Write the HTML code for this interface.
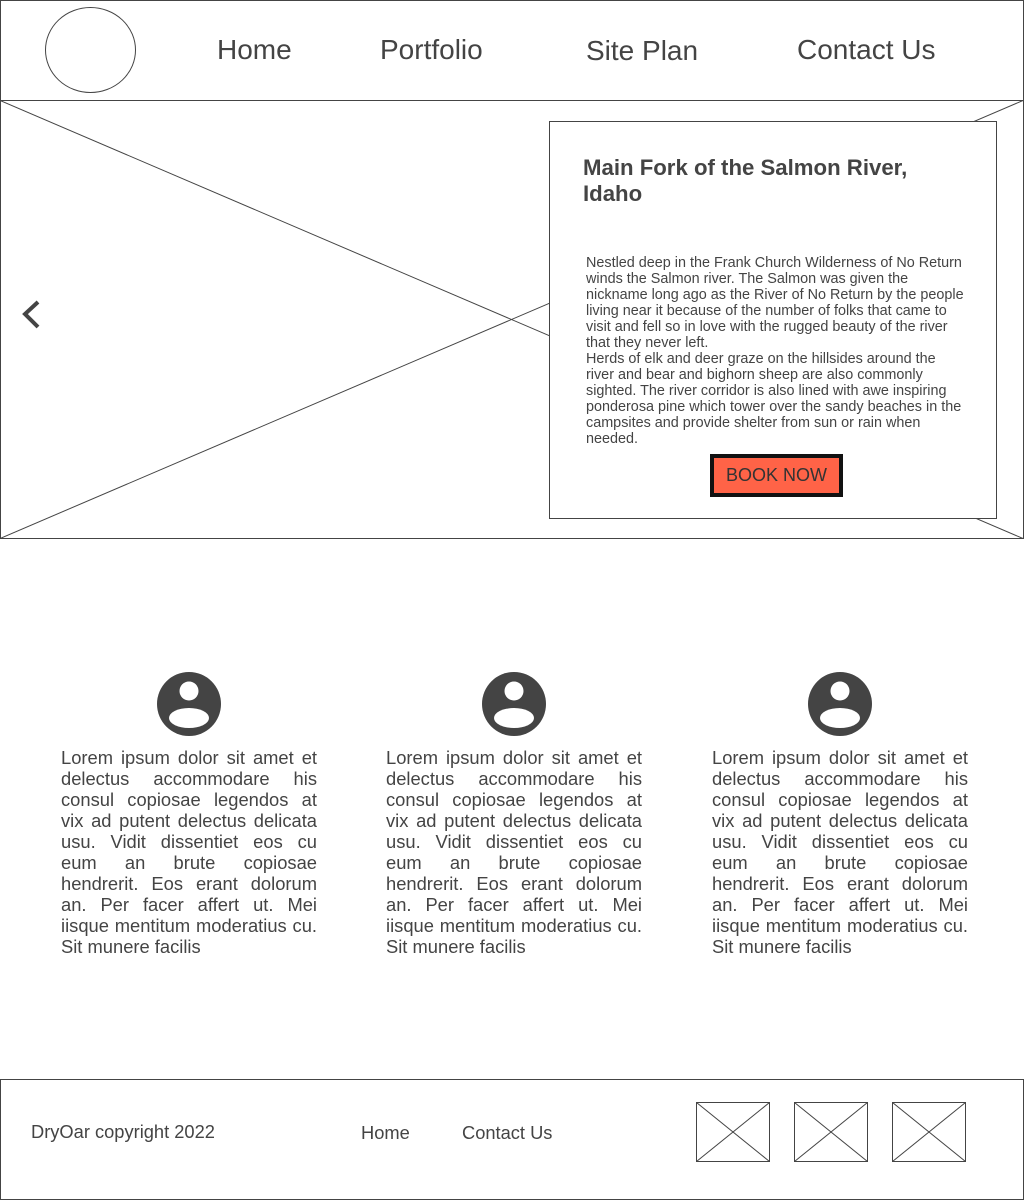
<!DOCTYPE html>
<html><head><meta charset="utf-8"><style>
*{margin:0;padding:0;box-sizing:border-box}
body{width:1024px;height:1200px;position:relative;background:#fff;font-family:"Liberation Sans",Arial,sans-serif;color:#444;overflow:hidden}
.a{position:absolute}
.nav{font-size:28px;top:34px;color:#444}
.card{left:549px;top:121px;width:448px;height:398px;border:1px solid #444;background:#fff}
.lorem{width:256px;font-size:18.35px;line-height:21px;text-align:justify;top:747px}
.fl{font-size:18.3px;color:#444}
</style></head><body>
<svg class="a" style="left:0;top:0" width="1024" height="1200">
<rect x="0.5" y="0.5" width="1023" height="100" fill="none" stroke="#444"/>
<ellipse cx="90.5" cy="50" rx="45" ry="42.5" fill="none" stroke="#444"/>
<rect x="0.5" y="100.5" width="1023" height="438" fill="none" stroke="#444"/>
<line x1="0" y1="100.5" x2="1023" y2="538.5" stroke="#444"/>
<line x1="0" y1="538.5" x2="1023" y2="100.5" stroke="#444"/>
<polyline points="38,302 25,314 38,327" fill="none" stroke="#444" stroke-width="4"/>
<rect x="0.5" y="1079.5" width="1023" height="120" fill="none" stroke="#444"/>
<g fill="none" stroke="#444" stroke-width="1">
<rect x="696.5" y="1102.5" width="73" height="59"/><line x1="696.5" y1="1102.5" x2="769.5" y2="1161.5"/><line x1="696.5" y1="1161.5" x2="769.5" y2="1102.5"/>
<rect x="794.5" y="1102.5" width="73" height="59"/><line x1="794.5" y1="1102.5" x2="867.5" y2="1161.5"/><line x1="794.5" y1="1161.5" x2="867.5" y2="1102.5"/>
<rect x="892.5" y="1102.5" width="73" height="59"/><line x1="892.5" y1="1102.5" x2="965.5" y2="1161.5"/><line x1="892.5" y1="1161.5" x2="965.5" y2="1102.5"/>
</g>
<defs>
<g id="u"><circle r="32" fill="#444"/><circle cx="0" cy="-13" r="9.5" fill="#fff"/><ellipse cx="0" cy="14" rx="20" ry="10" fill="#fff"/></g></defs>
<use href="#u" x="189" y="704"/><use href="#u" x="514" y="704"/><use href="#u" x="840" y="704"/>
</svg>
<div class="a nav" style="left:217px">Home</div>
<div class="a nav" style="left:380px">Portfolio</div>
<div class="a nav" style="left:586px;top:35px">Site Plan</div>
<div class="a nav" style="left:797px">Contact Us</div>
<div class="a card">
<div class="a" style="left:33px;top:33px;font-size:22.2px;font-weight:bold;line-height:26px;width:380px;color:#444">Main Fork of the Salmon River, Idaho</div>
<div class="a" style="left:36px;top:133px;width:380px;font-size:14.4px;line-height:16px;color:#444">Nestled deep in the Frank Church Wilderness of No Return winds the Salmon river. The Salmon was given the nickname long ago as the River of No Return by the people living near it because of the number of folks that came to visit and fell so in love with the rugged beauty of the river that they never left.<br>Herds of elk and deer graze on the hillsides around the river and bear and bighorn sheep are also commonly sighted. The river corridor is also lined with awe inspiring ponderosa pine which tower over the sandy beaches in the campsites and provide shelter from sun or rain when needed.</div>
<div class="a" style="left:160px;top:332px;width:133px;height:43px;border:4px solid #111;background:#ff6347;font-size:18px;text-align:center;line-height:35px;color:#333">BOOK NOW</div>
</div>
<div class="a lorem" style="left:61px">Lorem ipsum dolor sit amet et delectus accommodare his consul copiosae legendos at vix ad putent delectus delicata usu. Vidit dissentiet eos cu eum an brute copiosae hendrerit. Eos erant dolorum an. Per facer affert ut. Mei iisque mentitum moderatius cu. Sit munere facilis</div>
<div class="a lorem" style="left:386px">Lorem ipsum dolor sit amet et delectus accommodare his consul copiosae legendos at vix ad putent delectus delicata usu. Vidit dissentiet eos cu eum an brute copiosae hendrerit. Eos erant dolorum an. Per facer affert ut. Mei iisque mentitum moderatius cu. Sit munere facilis</div>
<div class="a lorem" style="left:712px">Lorem ipsum dolor sit amet et delectus accommodare his consul copiosae legendos at vix ad putent delectus delicata usu. Vidit dissentiet eos cu eum an brute copiosae hendrerit. Eos erant dolorum an. Per facer affert ut. Mei iisque mentitum moderatius cu. Sit munere facilis</div>
<div class="a fl" style="left:31px;top:1121px">DryOar copyright 2022</div>
<div class="a fl" style="left:361px;top:1122px">Home</div>
<div class="a fl" style="left:462px;top:1122px">Contact Us</div>
</body></html>
